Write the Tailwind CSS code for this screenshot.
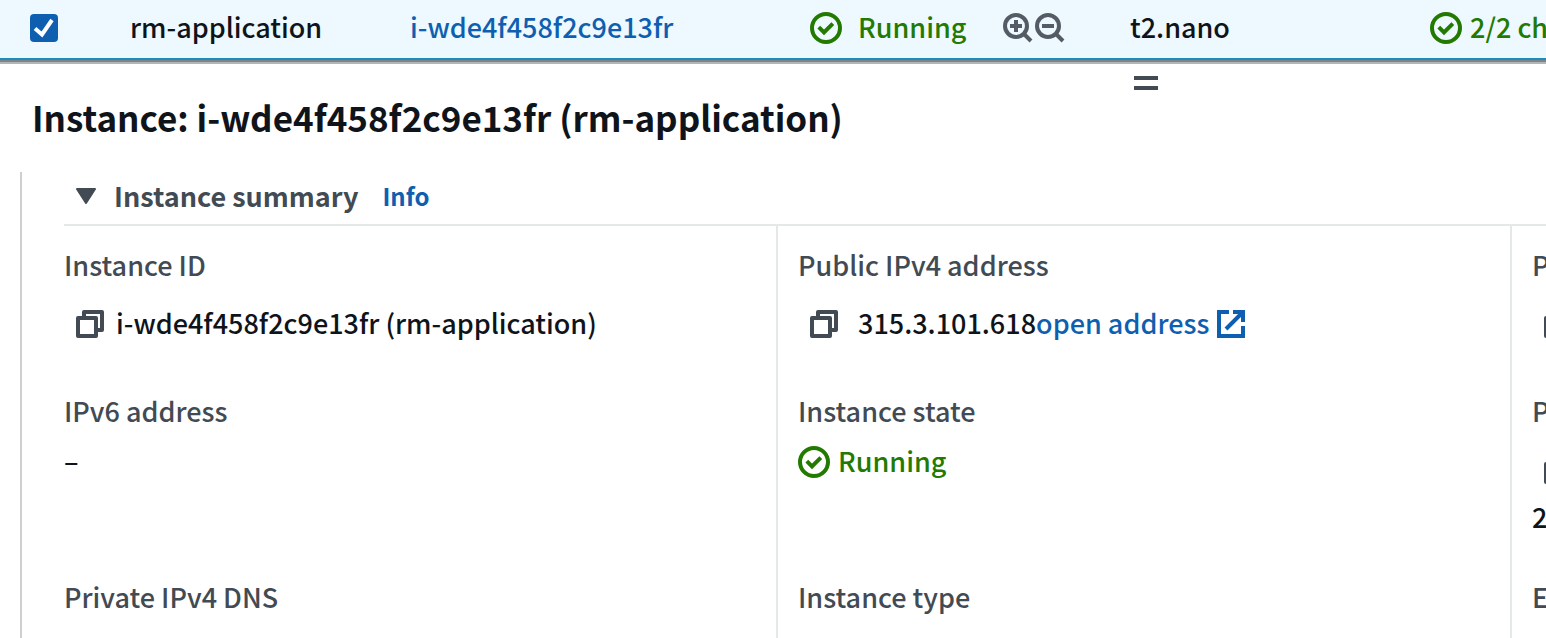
<!DOCTYPE html>
<html lang="en">
<head>
<meta charset="utf-8">
<title>Instance: i-wde4f458f2c9e13fr (rm-application)</title>
<script src="https://cdn.jsdelivr.net/npm/@tailwindcss/browser@4"></script>
</head>
<body class="bg-white font-['Noto_Sans_CJK_SC',sans-serif] text-[27px] leading-[38px] font-medium text-[#0f141a] overflow-hidden">
<svg class="hidden" aria-hidden="true">
  <symbol id="ok" viewBox="0 0 16 16" fill="none" stroke="currentColor" stroke-width="2"><circle cx="8" cy="8" r="7"/><path d="M4.4 7.6l2.6 2.6 4.4-4.4"/></symbol>
  <symbol id="copy" viewBox="0 0 28 28" fill="none" stroke="currentColor" stroke-width="4" stroke-linejoin="round"><path d="M2 8h18v18H2z"/><path d="M8 8V2h18v18h-6"/></symbol>
</svg>
<div class="flex min-h-screen flex-col">
  <table class="w-full table-fixed border-collapse bg-[#edf8ff]">
    <colgroup><col class="w-[110px]"><col class="w-[280px]"><col class="w-[400px]"><col class="w-[320px]"><col class="w-[300px]"><col></colgroup>
    <tbody>
      <tr class="h-[58px] whitespace-nowrap">
        <td class="pb-0.5 pl-[30px]">
          <label class="relative block size-7">
            <input type="checkbox" checked aria-label="Select rm-application" class="block size-7 appearance-none rounded bg-[#0f5fb1]">
            <svg class="pointer-events-none absolute inset-0 size-7" viewBox="0 0 28 28" fill="none" stroke="#fff" stroke-width="4"><path d="M5 14.5l7 6L22 6"/></svg>
          </label>
        </td>
        <td class="pb-1 pl-5">rm-application</td>
        <td class="pb-1 pl-5"><a href="#" class="text-[#0f5fb1]">i-wde4f458f2c9e13fr</a></td>
        <td class="pb-0.5 pl-5">
          <div class="flex items-center text-[#237a00]">
            <svg class="mr-4 size-8 shrink-0"><use href="#ok"/></svg>
            <span class="w-[145px] pb-0.5">Running</span>
            <button type="button" aria-label="Zoom in" class="mr-0.5 text-[#545b64]"><svg class="size-[30px]" viewBox="0 0 30 30" fill="none" stroke="currentColor" stroke-width="4"><circle cx="13" cy="13" r="11"/><path d="M21 21l7 7M13 7v12M7 13h12"/></svg></button>
            <button type="button" aria-label="Zoom out" class="text-[#545b64]"><svg class="size-[30px]" viewBox="0 0 30 30" fill="none" stroke="currentColor" stroke-width="4"><circle cx="13" cy="13" r="11"/><path d="M21 21l7 7M7 13h12"/></svg></button>
          </div>
        </td>
        <td class="pb-1 pl-5">t2.nano</td>
        <td class="overflow-hidden pb-0.5 pl-5">
          <div class="flex items-center gap-2 text-[#237a00]"><svg class="size-8 shrink-0"><use href="#ok"/></svg><span class="pb-0.5">2/2 ch</span></div>
        </td>
      </tr>
    </tbody>
  </table>
  <div class="h-0.5 bg-[#1d8cbd]"></div>
  <div class="h-0.5 bg-[#7f8486]"></div>
  <div class="h-0.5 bg-[#b3b6b7]"></div>
  <div class="grid h-7 grid-cols-[1134fr_24fr_388fr] pt-3">
    <button type="button" aria-label="Resize panel" class="col-start-2 h-3.5 border-y-4 border-[#424a53]"></button>
  </div>
  <h1 class="pl-8 pb-[30px] text-[35px] leading-[50px] font-bold">Instance: i-wde4f458f2c9e13fr (rm-application)</h1>
  <section class="ml-5 flex flex-1 flex-col border-l-2 border-[#cfcfcf] pl-[42px]">
    <div class="flex h-[54px] items-center border-b-2 border-[#e4e9e8] pb-1 pl-3">
      <button type="button" class="flex items-center font-bold text-[#424a53]">
        <svg class="mr-[18px] h-4 w-5" viewBox="0 0 20 16" fill="currentColor" stroke="currentColor" stroke-width="2" stroke-linejoin="round"><path d="M1 1h18L10 15z"/></svg>
        Instance summary
      </button>
      <a href="#" class="ml-6 text-[24px] font-bold text-[#0f5fb1]">Info</a>
    </div>
    <div class="grid flex-1 grid-cols-[712fr_734fr_36fr]">
      <dl class="min-w-0 pt-5">
        <div class="h-[146px]">
          <dt class="pb-0.5 text-[#424a53]">Instance ID</dt>
          <dd class="mt-[18px] flex items-center pl-3"><button type="button" aria-label="Copy instance ID" class="mr-3 text-[#424a53]"><svg class="size-7"><use href="#copy"/></svg></button><span class="pb-0.5">i-wde4f458f2c9e13fr (rm-application)</span></dd>
        </div>
        <div class="h-[186px]">
          <dt class="pb-0.5 text-[#424a53]">IPv6 address</dt>
          <dd class="mt-2.5">–</dd>
        </div>
        <div><dt class="text-[#424a53]">Private IPv4 DNS</dt></div>
      </dl>
      <dl class="min-w-0 border-l-2 border-[#e4e9e8] pt-5 pl-5">
        <div class="h-[146px]">
          <dt class="pb-0.5 text-[#424a53]">Public IPv4 address</dt>
          <dd class="mt-[18px] flex items-center pl-3"><button type="button" aria-label="Copy public IPv4 address" class="mr-5 text-[#424a53]"><svg class="size-7"><use href="#copy"/></svg></button><span class="pb-0.5">315.3.101.618</span><a href="#" class="flex items-center gap-2 text-[#0f5fb1]"><span class="pb-0.5">open address</span><svg class="size-7" viewBox="0 0 28 28" fill="none" stroke="currentColor" stroke-width="4"><path d="M12 2H2v24h24V16M16 2h10v10M25 3L9 19"/></svg></a></dd>
        </div>
        <div class="h-[186px]">
          <dt class="pb-0.5 text-[#424a53]">Instance state</dt>
          <dd class="mt-2.5 flex items-center gap-2 text-[#237a00]"><svg class="size-8"><use href="#ok"/></svg><span class="pb-0.5">Running</span></dd>
        </div>
        <div><dt class="text-[#424a53]">Instance type</dt></div>
      </dl>
      <dl class="min-w-0 overflow-hidden border-l-2 border-[#e4e9e8] pt-5 pl-5">
        <div class="h-[146px]">
          <dt class="pb-0.5 text-[#424a53]">P</dt>
          <dd class="mt-[18px] flex h-10 items-center pl-3"><button type="button" aria-label="Copy private IPv4 address" class="text-[#424a53]"><svg class="size-7"><use href="#copy"/></svg></button></dd>
        </div>
        <div class="h-[186px]">
          <dt class="pb-0.5 text-[#424a53]">P</dt>
          <dd class="mt-[18px]"><button type="button" aria-label="Copy public IPv4 DNS" class="flex h-10 items-center pl-3 text-[#424a53]"><svg class="size-7"><use href="#copy"/></svg></button><span class="mt-2 block">2</span></dd>
        </div>
        <div><dt class="text-[#424a53]">E</dt></div>
      </dl>
    </div>
  </section>
</div>
</body>
</html>
